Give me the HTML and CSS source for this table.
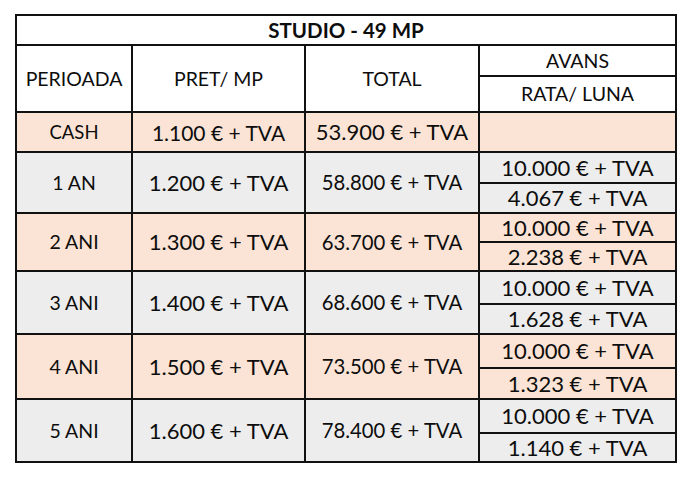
FILE: index.html
```html
<!DOCTYPE html>
<html lang="ro">
<head>
<meta charset="utf-8">
<title>Studio - 49 MP</title>
<link rel="stylesheet" href="styles.css">
</head>
<body>
<div class="page">
<table class="prices">
  <colgroup>
    <col class="c1"><col class="c2"><col class="c3"><col class="c4">
  </colgroup>
  <tr class="h-title"><th colspan="4" class="title">STUDIO - 49 MP</th></tr>
  <tr class="h-avans">
    <th rowspan="2">PERIOADA</th>
    <th rowspan="2">PRET/ MP</th>
    <th rowspan="2">TOTAL</th>
    <th class="sub">AVANS</th>
  </tr>
  <tr class="h-rata"><th class="sub">RATA/ LUNA</th></tr>

  <tr class="peach r-cash">
    <td class="per cash">CASH</td><td class="pret-cash">1.100 € + TVA</td><td class="big">53.900 € + TVA</td><td></td>
  </tr>

  <tr class="grey r1a">
    <td rowspan="2" class="per">1 AN</td><td rowspan="2" class="big">1.200 € + TVA</td><td rowspan="2" class="tot">58.800 € + TVA</td><td class="big">10.000 € + TVA</td>
  </tr>
  <tr class="grey r1b"><td class="big">4.067 € + TVA</td></tr>

  <tr class="peach r2a">
    <td rowspan="2" class="per">2 ANI</td><td rowspan="2" class="big">1.300 € + TVA</td><td rowspan="2" class="tot">63.700 € + TVA</td><td class="big">10.000 € + TVA</td>
  </tr>
  <tr class="peach r2b"><td class="big">2.238 € + TVA</td></tr>

  <tr class="grey r3a">
    <td rowspan="2" class="per">3 ANI</td><td rowspan="2" class="big">1.400 € + TVA</td><td rowspan="2" class="tot">68.600 € + TVA</td><td class="big">10.000 € + TVA</td>
  </tr>
  <tr class="grey r3b"><td class="big">1.628 € + TVA</td></tr>

  <tr class="peach r4a">
    <td rowspan="2" class="per">4 ANI</td><td rowspan="2" class="big">1.500 € + TVA</td><td rowspan="2" class="tot">73.500 € + TVA</td><td class="big">10.000 € + TVA</td>
  </tr>
  <tr class="peach r4b"><td class="big">1.323 € + TVA</td></tr>

  <tr class="grey r5a">
    <td rowspan="2" class="per">5 ANI</td><td rowspan="2" class="big">1.600 € + TVA</td><td rowspan="2" class="tot">78.400 € + TVA</td><td class="big">10.000 € + TVA</td>
  </tr>
  <tr class="grey r5b"><td class="big">1.140 € + TVA</td></tr>
</table>
</div>
</body>
</html>
```

FILE: styles.css
```css
html, body {
  margin: 0;
  padding: 0;
  background: #ffffff;
}

.page {
  padding: 14px 0 0 15px;
}

.prices {
  border-collapse: collapse;
  table-layout: fixed;
  width: 662px;
  font-family: Lato, "Liberation Sans", sans-serif;
  font-size: 19.5px;
  color: #0d0d0d;
}

.c1 { width: 116px; }
.c2 { width: 173px; }
.c3 { width: 174px; }
.c4 { width: 197px; }

.prices th,
.prices td {
  border: 2px solid #111111;
  padding: 0;
  text-align: center;
  vertical-align: middle;
  font-weight: normal;
  line-height: 1;
  white-space: nowrap;
  overflow: hidden;
}

.prices th.title {
  font-weight: bold;
  font-size: 20.5px;
}

.per { font-size: 19.5px; }
.per.cash { font-size: 18.5px; }
.pret-cash { font-size: 21px; }
.tot { font-size: 20.3px; }
.big { font-size: 22px; }

.peach td { background: #fbe4d5; }
.grey td { background: #ededed; }

.h-title { height: 30px; }
.h-avans { height: 31px; }
.h-rata { height: 36px; }
.r-cash { height: 40px; }
.r1a { height: 31px; }
.r1b { height: 30px; }
.r2a { height: 29px; }
.r2b { height: 29px; }
.r3a { height: 33px; }
.r3b { height: 30px; }
.r4a { height: 34px; }
.r4b { height: 31px; }
.r5a { height: 34px; }
.r5b { height: 29px; }
```
